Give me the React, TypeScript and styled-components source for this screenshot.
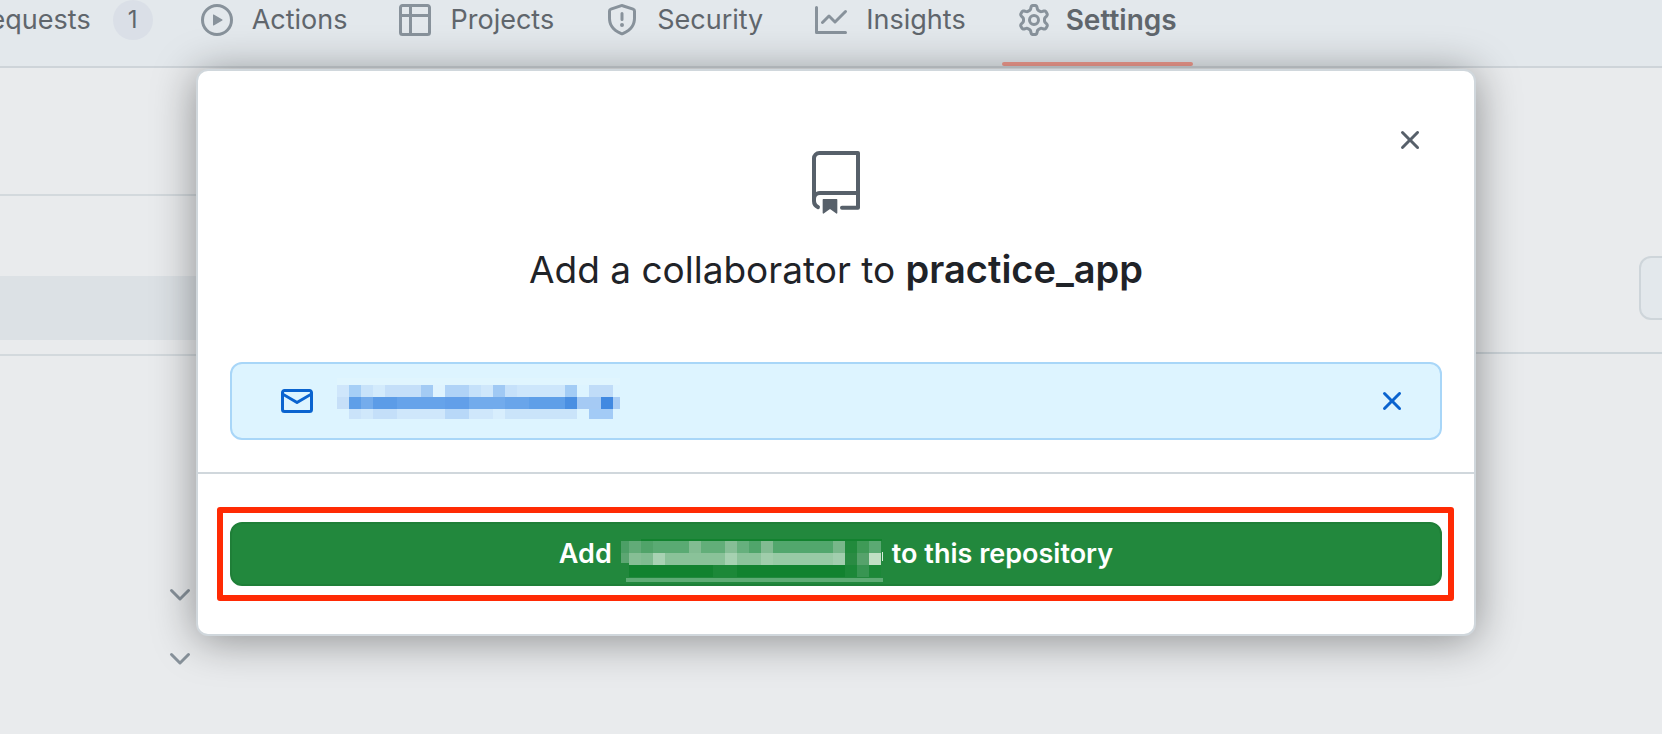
import React from "react";
import styled, { createGlobalStyle } from "styled-components";

const GlobalStyle = createGlobalStyle`
  *, *::before, *::after { box-sizing: border-box; }
  html, body { margin: 0; }
  body {
    background: #e9ebed;
    color: #1f2328;
    font-family: Inter, "Liberation Sans", sans-serif;
    font-size: 27px;
    line-height: 40px;
    overflow: hidden;
  }
  button { font: inherit; color: inherit; border: 0; margin: 0; padding: 0; background: none; cursor: pointer; }
`;

const ICONS = {
  play: "M8 0a8 8 0 1 1 0 16A8 8 0 0 1 8 0ZM1.5 8a6.5 6.5 0 1 0 13 0 6.5 6.5 0 0 0-13 0Zm4.879-2.773 4.264 2.559a.25.25 0 0 1 0 .428l-4.264 2.559A.25.25 0 0 1 6 10.559V5.442a.25.25 0 0 1 .379-.215Z",
  table:
    "M0 1.75C0 .784.784 0 1.75 0h12.5C15.216 0 16 .784 16 1.75v12.5A1.75 1.75 0 0 1 14.25 16H1.75A1.75 1.75 0 0 1 0 14.25ZM6.5 6.5v8h7.75a.25.25 0 0 0 .25-.25V6.5Zm8-1.5V1.75a.25.25 0 0 0-.25-.25H6.5V5Zm-13 1.5v7.75c0 .138.112.25.25.25H5v-8ZM5 5V1.5H1.75a.25.25 0 0 0-.25.25V5Z",
  shield:
    "M7.467.133a1.748 1.748 0 0 1 1.066 0l5.25 1.68A1.75 1.75 0 0 1 15 3.48V7c0 1.566-.32 3.182-1.303 4.682-.983 1.498-2.585 2.813-5.032 3.855a1.697 1.697 0 0 1-1.33 0c-2.447-1.042-4.049-2.357-5.032-3.855C1.32 10.182 1 8.566 1 7V3.48a1.755 1.755 0 0 1 1.217-1.667Zm.61 1.429a.25.25 0 0 0-.153 0l-5.25 1.68a.25.25 0 0 0-.174.238V7c0 1.358.275 2.666 1.057 3.86.784 1.194 2.121 2.34 4.366 3.297a.196.196 0 0 0 .154 0c2.245-.956 3.582-2.104 4.366-3.298C13.225 9.666 13.5 8.36 13.5 7V3.48a.251.251 0 0 0-.174-.237l-5.25-1.68ZM8.75 4.75v3a.75.75 0 0 1-1.5 0v-3a.75.75 0 0 1 1.5 0ZM9 10.5a1 1 0 1 1-2 0 1 1 0 0 1 2 0Z",
  graph:
    "M1.5 1.75V13.5h13.75a.75.75 0 0 1 0 1.5H.75a.75.75 0 0 1-.75-.75V1.75a.75.75 0 0 1 1.5 0Zm14.28 2.53-5.25 5.25a.75.75 0 0 1-1.06 0L7 7.06 4.28 9.78a.751.751 0 0 1-1.042-.018.751.751 0 0 1-.018-1.042l3.25-3.25a.75.75 0 0 1 1.06 0L10 7.94l4.72-4.72a.751.751 0 0 1 1.042.018.751.751 0 0 1 .018 1.042Z",
  gear: "M8 0a8.2 8.2 0 0 1 .701.031C9.444.095 9.99.645 10.16 1.29l.288 1.107c.018.066.079.158.212.224.231.114.454.243.668.386.123.082.233.09.299.071l1.103-.303c.644-.176 1.392.021 1.82.63.27.385.506.792.704 1.218.315.675.111 1.422-.364 1.891l-.814.806c-.049.048-.098.147-.088.294.016.257.016.515 0 .772-.01.147.038.246.088.294l.814.806c.475.469.679 1.216.364 1.891a7.977 7.977 0 0 1-.704 1.217c-.428.61-1.176.807-1.82.63l-1.102-.302c-.067-.019-.177-.011-.3.071a5.909 5.909 0 0 1-.668.386c-.133.066-.194.158-.211.224l-.29 1.106c-.168.646-.715 1.196-1.458 1.26a8.006 8.006 0 0 1-1.402 0c-.743-.064-1.289-.614-1.458-1.26l-.289-1.106c-.018-.066-.079-.158-.212-.224a5.738 5.738 0 0 1-.668-.386c-.123-.082-.233-.09-.299-.071l-1.103.303c-.644.176-1.392-.021-1.82-.63a8.12 8.12 0 0 1-.704-1.218c-.315-.675-.111-1.422.363-1.891l.815-.806c.05-.048.098-.147.088-.294a6.214 6.214 0 0 1 0-.772c.01-.147-.038-.246-.088-.294l-.815-.806C.635 6.045.431 5.298.746 4.623a7.92 7.92 0 0 1 .704-1.217c.428-.61 1.176-.807 1.82-.63l1.102.302c.067.019.177.011.3-.071.214-.143.437-.272.668-.386.133-.066.194-.158.211-.224l.29-1.106C6.009.645 6.556.095 7.299.03 7.53.01 7.764 0 8 0Zm-.571 1.525c-.036.003-.108.036-.137.146l-.289 1.105c-.147.561-.549.967-.998 1.189-.173.086-.34.183-.5.29-.417.278-.97.423-1.529.27l-1.103-.303c-.109-.03-.175.016-.195.045-.22.312-.412.644-.573.99-.014.031-.021.11.059.19l.815.806c.411.406.562.957.53 1.456a4.709 4.709 0 0 0 0 .582c.032.499-.119 1.05-.53 1.456l-.815.806c-.081.08-.073.159-.059.19.162.346.353.677.573.989.02.03.085.076.195.046l1.102-.303c.56-.153 1.113-.008 1.53.27.161.107.328.204.501.29.447.222.85.629.997 1.189l.289 1.105c.029.109.101.143.137.146a6.6 6.6 0 0 0 1.142 0c.036-.003.108-.036.137-.146l.289-1.105c.147-.561.549-.967.998-1.189.173-.086.34-.183.5-.29.417-.278.97-.423 1.529-.27l1.103.303c.109.029.175-.016.195-.045.22-.313.411-.644.573-.99.014-.031.021-.11-.059-.19l-.815-.806c-.411-.406-.562-.957-.53-1.456a4.709 4.709 0 0 0 0-.582c-.032-.499.119-1.05.53-1.456l.815-.806c.081-.08.073-.159.059-.19a6.464 6.464 0 0 0-.573-.989c-.02-.03-.085-.076-.195-.046l-1.102.303c-.56.153-1.113.008-1.53-.27a4.44 4.44 0 0 0-.501-.29c-.447-.222-.85-.629-.997-1.189l-.289-1.105c-.029-.11-.101-.143-.137-.146a6.6 6.6 0 0 0-1.142 0ZM11 8a3 3 0 1 1-6 0 3 3 0 0 1 6 0ZM9.5 8a1.5 1.5 0 1 0-3.001.001A1.5 1.5 0 0 0 9.5 8Z",
  mail: "M1.75 2h12.5c.966 0 1.75.784 1.75 1.75v8.5A1.75 1.75 0 0 1 14.25 14H1.75A1.75 1.75 0 0 1 0 12.25v-8.5C0 2.784.784 2 1.75 2ZM1.5 12.251c0 .138.112.25.25.25h12.5a.25.25 0 0 0 .25-.25V5.809L8.38 9.397a.75.75 0 0 1-.76 0L1.5 5.809v6.442Zm13-8.181v-.32a.25.25 0 0 0-.25-.25H1.75a.25.25 0 0 0-.25.25v.32L8 7.88Z",
  close:
    "M3.72 3.72a.75.75 0 0 1 1.06 0L8 6.94l3.22-3.22a.749.749 0 0 1 1.275.326.749.749 0 0 1-.215.734L9.06 8l3.22 3.22a.749.749 0 0 1-.326 1.275.749.749 0 0 1-.734-.215L8 9.06l-3.22 3.22a.751.751 0 0 1-1.042-.018.751.751 0 0 1-.018-1.042L6.94 8 3.72 4.78a.75.75 0 0 1 0-1.06Z",
  chevron:
    "M12.78 5.22a.749.749 0 0 1 0 1.06l-4.25 4.25a.749.749 0 0 1-1.06 0L3.22 6.28a.749.749 0 1 1 1.06-1.06L8 8.939l3.72-3.719a.749.749 0 0 1 1.06 0Z",
};

const Svg = styled.svg`
  display: block;
  flex: none;
  fill: currentColor;
`;

function Icon({ name }: { name: keyof typeof ICONS }) {
  return (
    <Svg width="32" height="32" viewBox="0 0 16 16" aria-hidden="true">
      <path d={ICONS[name]} />
    </Svg>
  );
}

function RepoIcon() {
  return (
    <Svg width="64" height="64" viewBox="0 0 24 24" aria-hidden="true">
      <path d="M3 2.75A2.75 2.75 0 0 1 5.75 0h14.5a.75.75 0 0 1 .75.75v20.5a.75.75 0 0 1-.75.75h-6a.75.75 0 0 1 0-1.5h5.25v-4H6A1.5 1.5 0 0 0 4.5 18v.75c0 .716.43 1.334 1.05 1.605a.75.75 0 0 1-.6 1.374A3.251 3.251 0 0 1 3 18.75ZM19.5 1.5H5.75c-.69 0-1.25.56-1.25 1.25v12.651A2.989 2.989 0 0 1 6 15h13.5Z" />
      <path d="M7 18.25a.25.25 0 0 1 .25-.25h5a.25.25 0 0 1 .25.25v5.01a.25.25 0 0 1-.397.201l-2.206-1.604a.25.25 0 0 0-.294 0L7.397 23.46a.25.25 0 0 1-.397-.2v-5.01Z" />
    </Svg>
  );
}

/* Page behind the dialog */

const Page = styled.div`
  min-height: 100vh;
`;

const RepoNav = styled.nav`
  display: flex;
  gap: 16px;
  height: 68px;
  overflow: hidden;
  background: #e3e8ec;
  border-bottom: 2px solid #ced4d9;
`;

const Tab = styled.a<{ $current?: boolean; $clipped?: boolean }>`
  position: relative;
  display: flex;
  flex: none;
  align-items: center;
  gap: 16px;
  height: 66px;
  padding: 0 16px 26px;
  margin-left: ${(p) => (p.$clipped ? "-90px" : "0")};
  color: #60666c;
  font-size: ${(p) => (p.$current ? "28px" : "27px")};
  font-weight: ${(p) => (p.$current ? 600 : 400)};
  text-decoration: none;
  white-space: nowrap;

  &::after {
    content: "";
    display: ${(p) => (p.$current ? "block" : "none")};
    position: absolute;
    inset: auto 0 0;
    height: 4px;
    border-radius: 2px;
    background: #f09a8e;
  }

  svg { color: #88929b; }
`;

const TabLabel = styled.span`
  padding: 0 4px 0 3px;

  [aria-current] > & { padding: 0; }
`;

const Counter = styled.span`
  min-width: 40px;
  height: 40px;
  margin-left: 6px;
  border-radius: 20px;
  background: #dadfe7;
  font-size: 24px;
  text-align: center;
`;

const Columns = styled.div`
  display: flex;
`;

const Sidebar = styled.aside`
  flex: none;
  width: 212px;
  padding-top: 126px;
`;

const SideGroup = styled.div<{ $before: number; $after: number }>`
  border-top: 2px solid #d3d9dd;
  padding: ${(p) => p.$before}px 0 ${(p) => p.$after}px;
`;

const SideRow = styled.div<{ $selected?: boolean }>`
  display: flex;
  align-items: center;
  justify-content: flex-end;
  height: 64px;
  padding: 0 16px;
  background: ${(p) => (p.$selected ? "#dce1e5" : "transparent")};
  color: #88929b;
`;

const Main = styled.main`
  flex: 1;
  min-width: 0;
  overflow: hidden;
`;

const MainHeader = styled.div`
  display: flex;
  justify-content: flex-end;
  padding: 188px 0 32px;
  border-bottom: 2px solid #ccd4d9;
`;

const OutlineButton = styled.button`
  width: 64px;
  height: 64px;
  margin-right: -41px;
  border: 2px solid #ced5da;
  border-radius: 12px;
  background: #e3e8ec;
`;

/* Dialog */

const Overlay = styled.div`
  position: absolute;
  inset: 0;
  display: flex;
  justify-content: center;
  align-items: flex-start;
  padding: 69px 0 0 10px;
`;

const Dialog = styled.section`
  width: 100%;
  max-width: 1280px;
  border: 2px solid #d0d7dc;
  border-radius: 12px;
  background: #fff;
  box-shadow: 0 4px 44px rgba(0, 0, 0, 0.4);
`;

const DialogBody = styled.div`
  padding: 37px 32px 32px;
`;

const DialogHeader = styled.header`
  display: grid;
  grid-template-columns: 64px 1fr 64px;
  color: #57606a;
`;

const HeaderIcon = styled.div`
  grid-column: 2;
  justify-self: center;
  margin-top: 43px;
`;

const IconButton = styled.button`
  display: grid;
  place-items: center;
  width: 64px;
  height: 64px;
`;

const Title = styled.h1`
  margin: 31px 0 68px;
  color: #1f2328;
  font-size: 37px;
  font-weight: 400;
  line-height: 48px;
  text-align: center;

  strong {
    font-size: 38px;
    font-weight: 600;
    line-height: 1;
  }
`;

const Invitee = styled.div`
  display: flex;
  align-items: center;
  height: 78px;
  padding: 0 16px 0 49px;
  border: 2px solid #a8d6f8;
  border-radius: 12px;
  background: #ddf4ff;
  color: #0a63cf;

  button { margin-left: auto; }
`;

const MosaicBox = styled.span`
  margin-left: 24px;
`;

const DialogFooter = styled.footer`
  padding: 48px 32px;
  border-top: 2px solid #d0d7dc;
`;

const Highlight = styled.div`
  position: relative;

  &::after {
    content: "";
    position: absolute;
    inset: -15px -12px -15px -13px;
    border: 6px solid #ff2a04;
    border-radius: 3px;
    pointer-events: none;
  }
`;

const PrimaryButton = styled.button`
  display: flex;
  align-items: center;
  justify-content: center;
  gap: 9px;
  width: 100%;
  height: 64px;
  border: 2px solid #1f7f38;
  border-radius: 12px;
  background: #22883d;
  color: #fff;
  font-weight: 600;
`;

/* Obscured e-mail addresses, drawn as coloured cells */

type Cell = [start: number, span: number, color: string];

const EMAIL_ROWS: Cell[][] = [
  [[0, 24, "#e0f5fe"]],
  [
    [0, 1, "#cfe6fb"], [1, 1, "#a6cff6"], [2, 1, "#c8e3fa"], [3, 1, "#d3ebfc"], [4, 3, "#c4dff9"],
    [7, 1, "#a3cbf4"], [8, 1, "#dff3fe"], [9, 2, "#b0d3f7"], [11, 1, "#c5e1fa"], [12, 1, "#cfe7fb"],
    [13, 1, "#a0c9f4"], [14, 1, "#c6e1fa"], [15, 4, "#cde6fb"], [19, 1, "#a3ccf5"], [21, 2, "#c0dcf8"],
  ],
  [
    [0, 1, "#c6dff8"], [1, 1, "#5f9fe8"], [2, 1, "#74acec"], [3, 2, "#5c9ce7"], [5, 4, "#66a3ea"],
    [9, 2, "#629fe9"], [11, 3, "#72abec"], [14, 2, "#69a5ea"], [16, 3, "#5f9fe8"], [19, 1, "#4a8fe2"],
    [20, 2, "#a5caf4"], [22, 1, "#4189e1"], [23, 1, "#a9cdf5"],
  ],
  [
    [1, 1, "#cae3fa"], [2, 1, "#d0e8fb"], [3, 2, "#c4dff9"], [5, 4, "#cfe7fb"], [9, 2, "#b8d8f8"],
    [11, 2, "#cfe7fb"], [13, 1, "#d8eefd"], [14, 6, "#cae4fa"], [21, 2, "#a3cbf6"],
  ],
];

const EMAIL_TOPS = [1, 8, 20, 32];
const EMAIL_HEIGHTS = [7, 12, 12, 10];

function EmailMosaic() {
  return (
    <Svg width="283" height="48" viewBox="0 0 283 48" role="img" aria-label="Hidden e-mail address">
      {EMAIL_ROWS.map((row, r) =>
        row.map(([start, span, color]) => (
          <rect key={`${r}-${start}`} x={start * 12} y={EMAIL_TOPS[r]} width={span * 12} height={EMAIL_HEIGHTS[r]} fill={color} />
        ))
      )}
    </Svg>
  );
}

const BUTTON_ROWS: Cell[][] = [
  [
    [0, 1, "#62ab78"], [1, 1, "#50a369"], [2, 3, "#5aaa73"], [5, 1, "#82bc92"], [6, 2, "#62ae79"],
    [8, 1, "#86be96"], [9, 1, "#66b07d"], [10, 1, "#50a56b"], [11, 1, "#82bb92"], [12, 5, "#52a76d"],
    [17, 1, "#78b78a"], [18, 1, "#218a3c"], [19, 1, "#3f9a57"], [20, 1, "#5ba973"],
  ],
  [
    [0, 1, "#86be95"], [1, 1, "#80bc91"], [2, 1, "#a8d2b3"], [3, 5, "#8ac299"], [8, 1, "#a6d1b1"],
    [9, 2, "#8cc39b"], [11, 1, "#a0cdab"], [12, 5, "#98caa5"], [17, 1, "#a2ceae"], [18, 1, "#2a8b43"],
    [19, 1, "#56a26b"], [20, 1, "#c2dfc5"],
  ],
  [[0, 7, "#12822f"], [7, 2, "#1c8838"], [9, 9, "#12822f"], [18, 1, "#1c8838"], [19, 1, "#389552"], [20, 1, "#1c8838"]],
];

function ButtonMosaic() {
  return (
    <Svg width="262" height="32" viewBox="0 0 262 32" overflow="visible" role="img" aria-label="hidden address">
      <rect x="20" y="1" width="241" height="2" fill="#12822f" />
      <rect x="0" y="3" width="8" height="12" fill="#4c9f66" />
      <rect x="0" y="15" width="8" height="10" fill="#5ca672" />
      {BUTTON_ROWS.map((row, r) =>
        row.map(([start, span, color]) => (
          <rect key={`${r}-${start}`} x={8 + start * 12} y={3 + r * 12} width={span * 12} height="12" fill={color} />
        ))
      )}
      <rect x="5" y="40" width="257" height="4" fill="#5fab75" />
      <rect x="261" y="14" width="1" height="9" fill="#d8ecdd" />
    </Svg>
  );
}

export default function App() {
  return (
    <>
      <GlobalStyle />
      <Page>
        <RepoNav aria-label="Repository">
          <Tab href="#pulls" $clipped>
            Pull requests <Counter>1</Counter>
          </Tab>
          <Tab href="#actions"><Icon name="play" /><TabLabel>Actions</TabLabel></Tab>
          <Tab href="#projects"><Icon name="table" /><TabLabel>Projects</TabLabel></Tab>
          <Tab href="#security"><Icon name="shield" /><TabLabel>Security</TabLabel></Tab>
          <Tab href="#insights"><Icon name="graph" /><TabLabel>Insights</TabLabel></Tab>
          <Tab href="#settings" $current aria-current="page"><Icon name="gear" /><TabLabel>Settings</TabLabel></Tab>
        </RepoNav>
        <Columns>
          <Sidebar>
            <SideGroup $before={80} $after={14}>
              <SideRow $selected />
            </SideGroup>
            <SideGroup $before={207} $after={0}>
              <SideRow><button aria-label="Expand section"><Icon name="chevron" /></button></SideRow>
              <SideRow><button aria-label="Expand section"><Icon name="chevron" /></button></SideRow>
            </SideGroup>
          </Sidebar>
          <Main>
            <MainHeader><OutlineButton aria-label="Manage access" /></MainHeader>
          </Main>
        </Columns>
      </Page>
      <Overlay>
        <Dialog role="dialog" aria-modal="true" aria-labelledby="dialog-title">
          <DialogBody>
            <DialogHeader>
              <HeaderIcon><RepoIcon /></HeaderIcon>
              <IconButton aria-label="Close dialog"><Icon name="close" /></IconButton>
            </DialogHeader>
            <Title id="dialog-title">Add a collaborator to <strong>practice_app</strong></Title>
            <Invitee>
              <Icon name="mail" />
              <MosaicBox><EmailMosaic /></MosaicBox>
              <IconButton aria-label="Remove"><Icon name="close" /></IconButton>
            </Invitee>
          </DialogBody>
          <DialogFooter>
            <Highlight>
              <PrimaryButton><span>Add</span><ButtonMosaic /><span>to this repository</span></PrimaryButton>
            </Highlight>
          </DialogFooter>
        </Dialog>
      </Overlay>
    </>
  );
}
